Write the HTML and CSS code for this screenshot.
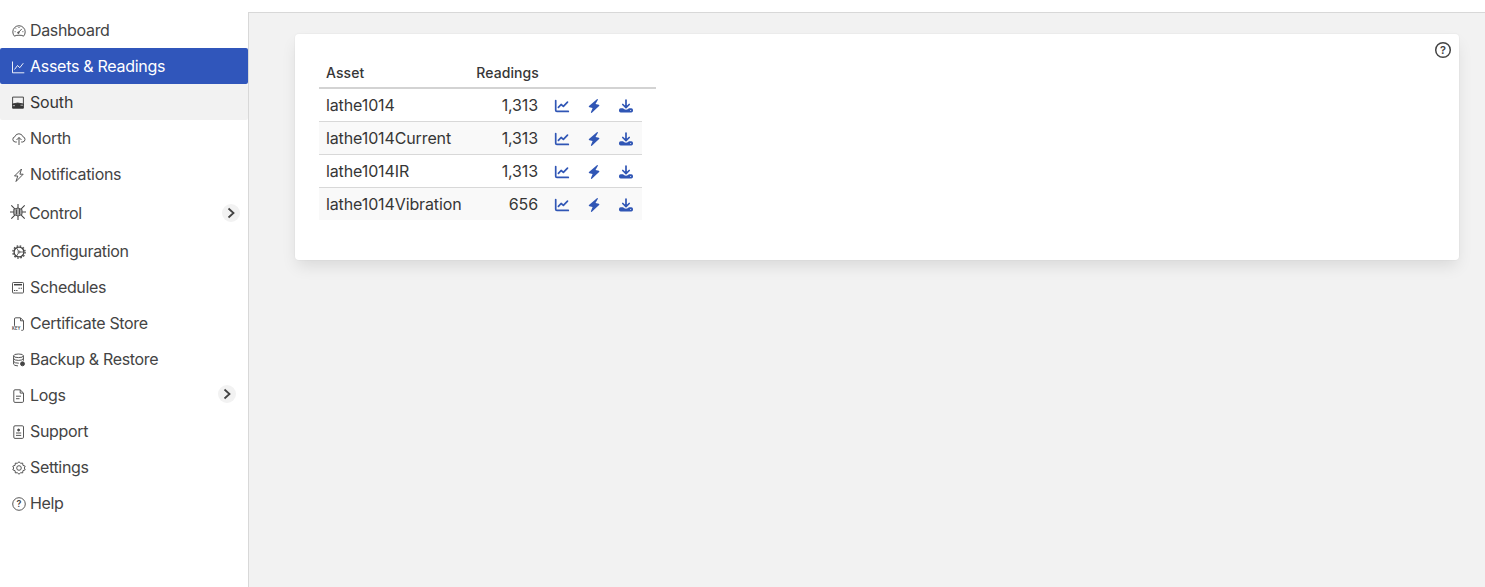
FILE: index.html
```html
<!DOCTYPE html>
<html lang="en">
<head>
  <meta charset="utf-8">
  <title>Assets &amp; Readings</title>
  <link rel="stylesheet" href="styles.css">
</head>
<body>
  <!-- icons shared by the table rows -->
  <svg class="sprite" xmlns="http://www.w3.org/2000/svg">
    <symbol id="chart" viewBox="0 0 16 16">
      <path d="M1.7 2.5v9.7a1.2 1.2 0 0 0 1.2 1.2h11.4M4.4 9.4l2.7-2.9 2.3 1.9 4.1-4.2" fill="none" stroke="currentColor" stroke-width="1.7" stroke-linecap="round" stroke-linejoin="round"/>
    </symbol>
    <symbol id="bolt" viewBox="0 0 16 16">
      <path d="M10.9 1.2 3 8q-.8.9.4 1.2l3.2.7-1.7 4.3q0 1.1 1 .6l7.2-6.9q.8-.9-.3-1.2l-3.3-.6 2.4-4.3q.1-1.200-1-.6z" fill="currentColor"/>
    </symbol>
    <symbol id="download" viewBox="0 0 16 16">
      <path d="M8 2v7.300M4.800 6.500 8 9.600l3.200-3.100" fill="none" stroke="currentColor" stroke-width="1.700" stroke-linecap="round" stroke-linejoin="round"/>
      <path d="M2.700 10.300H5q1.200 1.400 3 1.400t3-1.400h2.300Q15 10.300 15 12v.7q0 1.700-1.700 1.700H2.700Q1 14.400 1 12.700V12q0-1.700 1.700-1.700z" fill="currentColor"/>
      <circle cx="12.700" cy="12.400" r=".5" fill="#fff"/>
    </symbol>
    <symbol id="chevron" viewBox="0 0 18 18">
      <path d="m6.500 4.500 5 4.500-5 4.500" fill="none" stroke="currentColor" stroke-width="1.800"/>
    </symbol>
  </svg>

  <header class="navbar"></header>
  <div class="wrapper">
    <aside class="sidebar">
      <ul class="menu">
        <li><a class="item">
          <svg class="icon" viewBox="0 0 14 14"><path d="M2.500 12.200A6.200 6.200 0 1 1 11.500 12.200Q10.500 11.200 7 11.200T2.500 12.200zM6.200 8.800l3.600-3.900M7 3v1M3.800 4.400l.7.7M2.600 7.700h1M10.400 7.700h1"/><circle cx="6.400" cy="8.700" r=".8"/></svg>
          <span>Dashboard</span></a></li>
        <li><a class="item active">
          <svg class="icon" viewBox="0 0 14 14"><path d="M.5 1.500v11.300h11.800M2.500 9.500l3-4 2.300 2.200 3.500-4.500"/></svg>
          <span>Assets &amp; Readings</span></a></li>
        <li><a class="item hover">
          <svg class="icon" viewBox="0 0 14 14"><path d="M.6 1.100h10.800v7.500H.6z"/><path class="solid" d="M.6 8l5-1 5.800 1v4.200H.6z"/><path d="M1 9.700h2M8.500 9.200h2.500" stroke="#f2f2f2" stroke-width=".7"/></svg>
          <span>South</span></a></li>
        <li><a class="item">
          <svg class="icon" viewBox="0 0 14 14"><path d="M4.800 10H3.200A2.700 2.700 0 0 1 2.900 4.700A4.200 4.200 0 0 1 10.900 4.700A2.700 2.700 0 0 1 10.700 10H9.200M7 13V5.500M4.500 8 7 5.500 9.500 8"/></svg>
          <span>North</span></a></li>
        <li><a class="item">
          <svg class="icon" viewBox="0 0 14 14"><path d="M9.500 1 2.500 8h3.300L4 13.500l7.200-7.300H7.900z"/></svg>
          <span>Notifications</span></a></li>
        <li><a class="item control">
          <svg class="icon wide" viewBox="0 0 16 16"><path d="M8 0v4M8 12v4M0 8h4M12 8h4M1.300 1.300l3.500 3.500M11.200 11.200l3.500 3.500M14.700 1.300l-3.500 3.500M4.800 11.200l-3.500 3.500" stroke-width="1.100"/><path class="shade" d="M3.800 5.200 8 4l4 1.500v5L8 12l-4.200-1.500z"/><path d="M6.500 5.500v5M9.500 5v5.500"/></svg>
          <span>Control</span>
          <svg class="toggle"><use href="#chevron"/></svg></a></li>
        <li><a class="item">
          <svg class="icon" viewBox="0 0 14 14"><circle cx="7" cy="7" r="4.900" stroke-width="1.300"/><circle cx="7" cy="7" r="6.100" stroke-width="1.300" stroke-dasharray="1.600 1.593"/><circle cx="7" cy="7" r="1"/><path d="M8 7h3.800M6.400 6 4.600 2.900M6.400 8l-1.800 3.100" stroke-width=".8"/></svg>
          <span>Configuration</span></a></li>
        <li><a class="item">
          <svg class="icon" viewBox="0 0 14 14"><rect x=".5" y="1.500" width="11" height="10.500" rx=".8"/><path d="M2 3.700h8" stroke-width="1.500"/><path d="M6.500 7.200h1.300M8.700 7.200H10M2 9.500h1.300M4.200 9.500h1.300" stroke-width="1.100"/></svg>
          <span>Schedules</span></a></li>
        <li><a class="item">
          <svg class="icon" viewBox="0 0 14 14"><path d="M2.500 8.800V2q0-1.200 1.200-1.200h4.800l3 3v8.500q0 1-1 1H9.300M8.500 1v2.800h2.800"/><text x="0" y="13.200" font-size="4.200">KEY</text></svg>
          <span>Certificate Store</span></a></li>
        <li><a class="item">
          <svg class="icon" viewBox="0 0 14 14"><ellipse cx="6.500" cy="2.800" rx="4.900" ry="1.800"/><path d="M1.600 2.800v8.400Q2 12.700 6 12.900M11.400 2.800v5M1.600 5.600q.7 1.800 4.900 1.800t4.900-1.800M1.600 8.400q.7 1.800 5.200 1.800"/><circle class="solid" cx="10.500" cy="10.800" r="2"/></svg>
          <span>Backup &amp; Restore</span></a></li>
        <li><a class="item">
          <svg class="icon" viewBox="0 0 14 14"><path d="M3 .8h5.200l3.300 3.300v8.100q0 1.200-1.200 1.200H3q-1.200 0-1.200-1.200V2Q1.800.8 3 .8zM8.200 1v3.100h3.200M4 7.200h5M4 9.700h3.500"/></svg>
          <span>Logs</span>
          <svg class="toggle inner"><use href="#chevron"/></svg></a></li>
        <li><a class="item">
          <svg class="icon" viewBox="0 0 14 14"><rect x="1.800" y=".8" width="9.700" height="12.600" rx="1.200"/><path d="M4 8h5.200M4 10.400h5.200"/><circle class="solid" cx="6.600" cy="5" r="1"/></svg>
          <span>Support</span></a></li>
        <li><a class="item">
          <svg class="icon" viewBox="0 0 14 14"><path d="m7 .7 1.500 1.600 2.200-.2.200 2.200 2.300.9L12.300 7l.9 1.800-2.300.9-.2 2.200-2.200-.2L7 13.300l-1.500-1.600-2.200.2-.2-2.200-2.300-.9L1.700 7 .8 5.200l2.300-.9.200-2.200 2.200.2z"/><circle cx="7" cy="7" r="2.300"/></svg>
          <span>Settings</span></a></li>
        <li><a class="item">
          <svg class="icon" viewBox="0 0 14 14"><circle cx="7" cy="7" r="6.300"/><text x="7" y="10.200" font-size="9" text-anchor="middle">?</text></svg>
          <span>Help</span></a></li>
      </ul>
    </aside>

    <main class="content">
      <div class="card">
        <svg class="help" viewBox="0 0 18 18"><circle cx="9" cy="9" r="7.300"/><text x="9" y="12.900" font-size="11" text-anchor="middle">?</text></svg>
        <table class="table">
          <thead>
            <tr><th class="name">Asset</th><th class="count">Readings</th><th class="action"></th><th class="action"></th><th class="action"></th><th class="rest"></th></tr>
          </thead>
          <tbody>
            <tr>
              <td>lathe1014</td><td class="count">1,313</td>
              <td class="action"><svg><use href="#chart"/></svg></td>
              <td class="action"><svg><use href="#bolt"/></svg></td>
              <td class="action"><svg><use href="#download"/></svg></td>
            </tr>
            <tr>
              <td>lathe1014Current</td><td class="count">1,313</td>
              <td class="action"><svg><use href="#chart"/></svg></td>
              <td class="action"><svg><use href="#bolt"/></svg></td>
              <td class="action"><svg><use href="#download"/></svg></td>
            </tr>
            <tr>
              <td>lathe1014IR</td><td class="count">1,313</td>
              <td class="action"><svg><use href="#chart"/></svg></td>
              <td class="action"><svg><use href="#bolt"/></svg></td>
              <td class="action"><svg><use href="#download"/></svg></td>
            </tr>
            <tr>
              <td>lathe1014Vibration</td><td class="count">656</td>
              <td class="action"><svg><use href="#chart"/></svg></td>
              <td class="action"><svg><use href="#bolt"/></svg></td>
              <td class="action"><svg><use href="#download"/></svg></td>
            </tr>
          </tbody>
        </table>
      </div>
    </main>
  </div>
</body>
</html>
```
FILE: styles.css
```css
* {
  box-sizing: border-box;
}
body {
  margin: 0;
  height: 587px;
  overflow: hidden;
  background: #fff;
  color: #444;
  font-family: Inter, "Liberation Sans", sans-serif;
  font-size: 16px;
}
.sprite {
  position: absolute;
  width: 0;
  height: 0;
}
.navbar {
  height: 12px;
}
.wrapper {
  display: flex;
  height: 575px;
}
.sidebar {
  width: 248px;
}
.menu {
  list-style: none;
  margin: 0;
  padding: 0;
}
.item {
  display: flex;
  align-items: center;
  height: 36px;
  padding: 0 12px;
  border-radius: 2px;
  letter-spacing: -0.33px;
}
.item.active {
  background: #3056bb;
  color: #fff;
  letter-spacing: -0.28px;
}
.item.hover {
  background: #f2f2f2;
  color: #363636;
  letter-spacing: -0.15px;
}
.item.control {
  height: 41px;
  padding: 0 8px 0 10px;
}
.item.control span {
  margin-left: -1px;
}
.icon {
  flex: none;
  width: 14px;
  height: 14px;
  margin: 2px 4px 0 0;
  overflow: visible;
  fill: none;
  stroke: currentColor;
  stroke-width: .9;
}
.icon.wide {
  width: 16px;
  height: 16px;
  margin-top: -1px;
}
.icon .solid {
  fill: currentColor;
}
.icon .shade {
  fill: #aaa;
}
.icon text,
.help text {
  fill: currentColor;
  stroke: none;
  font-weight: 600;
  letter-spacing: 0;
}
.toggle {
  width: 18px;
  height: 18px;
  margin-left: auto;
  border-radius: 50%;
  background: #f2f2f2;
}
.toggle.inner {
  margin-top: -2px;
}
.content {
  flex: 1;
  padding: 21px 26px 0 46px;
  background: #f2f2f2;
  border-top: 1px solid #d8d8d8;
  border-left: 1px solid #d8d8d8;
}
.card {
  position: relative;
  height: 226px;
  padding: 24px;
  background: #fff;
  border-radius: 4px;
  box-shadow: 0 8px 16px -2px rgba(10, 10, 10, .1), 0 0 0 1px rgba(10, 10, 10, .02);
}
.help {
  position: absolute;
  top: 7px;
  right: 7px;
  width: 18px;
  height: 18px;
  fill: none;
  stroke: currentColor;
  stroke-width: 1.5;
}
.table {
  width: 337px;
  table-layout: fixed;
  border-collapse: separate;
  border-spacing: 0;
  color: #363636;
  letter-spacing: -0.12px;
}
.table th {
  height: 31px;
  padding: 0 7px;
  border-bottom: 2px solid #d3d3d3;
  font-size: 14px;
  font-weight: 500;
  text-align: left;
  letter-spacing: 0.1px;
}
.table td {
  height: 33px;
  padding: 0 8px 0 7px;
  border-bottom: 1px solid #d8d8d8;
}
.table tbody tr:last-child td {
  border-bottom: 0;
  height: 32px;
}
.table tbody tr:nth-child(even) td {
  background: #f9f9f9;
}
.table .name {
  width: 150px;
}
.table .count {
  width: 77px;
  text-align: right;
}
.table .rest {
  width: 14px;
  padding: 0;
}
.table .action {
  width: 32px;
  padding: 0;
  text-align: center;
}
.action svg {
  display: block;
  width: 16px;
  height: 16px;
  margin: 1px auto 0;
  color: #3056b5;
}
```
